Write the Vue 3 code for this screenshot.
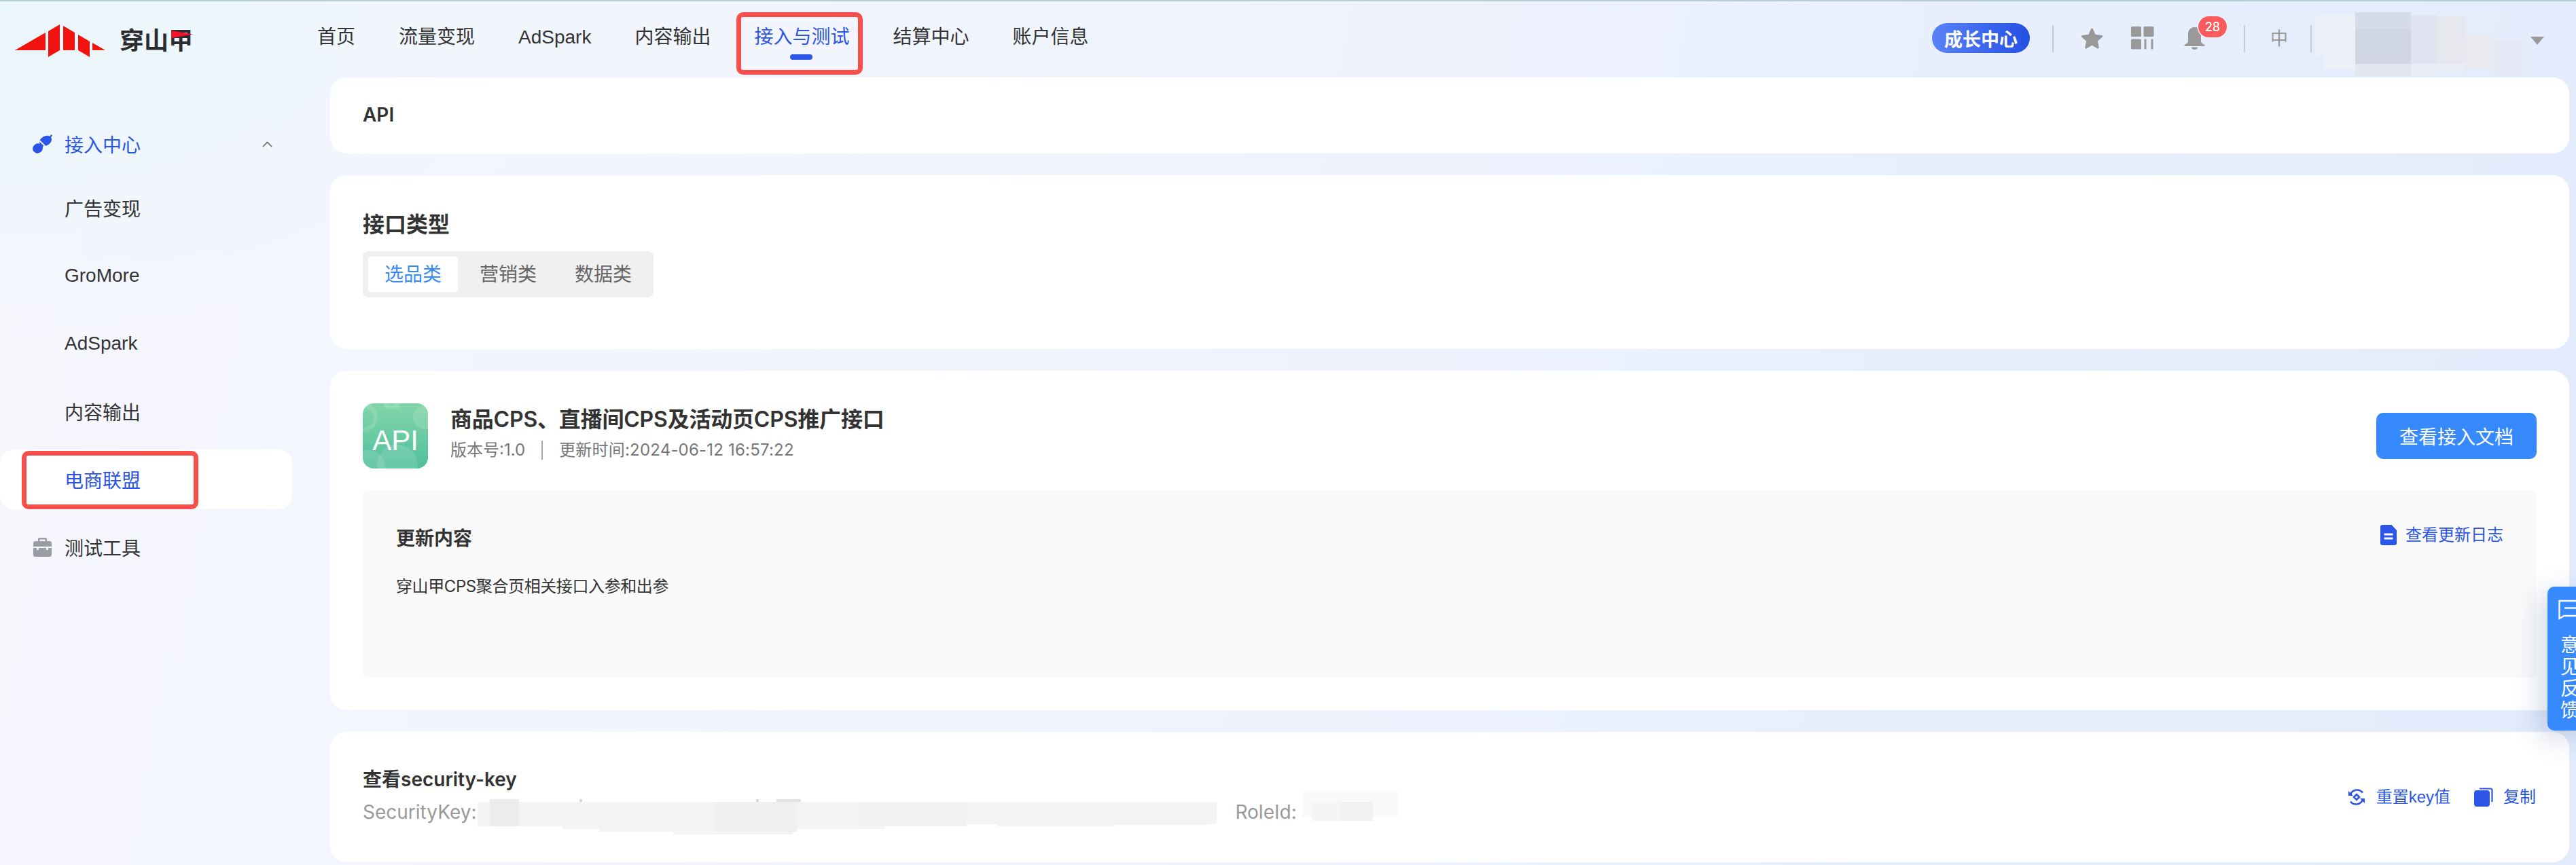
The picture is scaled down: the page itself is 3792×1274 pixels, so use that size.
<script setup>
const navItems = ['首页', '流量变现', 'AdSpark', '内容输出', '接入与测试', '结算中心', '账户信息']
const subItems = ['广告变现', 'GroMore', 'AdSpark', '内容输出', '电商联盟']
const tabs = ['选品类', '营销类', '数据类']
</script>

<template>
  <div class="page">
    <header class="header">
      <div class="logo">
        <svg class="logo-mark" width="134" height="50" viewBox="22 33 134 50">
          <path fill="#f2120f" d="M22 72 67 46V72ZM71 44 88 34V72L71 82ZM93 36 110 46V72H93ZM115 49 132 59V82L115 72ZM136 61 155 72H136Z" />
        </svg>
        <span class="logo-text">穿山甲<i class="logo-flag"></i></span>
      </div>
      <nav class="nav">
        <a v-for="item in navItems" :key="item" class="nav-item" :class="{ active: item === '接入与测试' }">{{ item }}</a>
      </nav>
      <div class="tools">
        <span class="pill">成长中心</span>
        <span class="vline first"></span>
        <svg class="ico star" width="35" height="33" viewBox="0 0 35 33"><path fill="#999" stroke="#999" stroke-width="3" stroke-linejoin="round" d="M17.500 3 21.600 12.300 31.800 13.400 24.200 20.200 26.300 30.100 17.500 25 8.700 30.100 10.800 20.200 3.200 13.400 13.400 12.300Z" /></svg>
        <svg class="ico grid" width="35" height="34" viewBox="0 0 35 34"><g fill="#999"><rect width="15" height="15" rx="1.500" /><rect x="18.500" width="15" height="15" rx="1.500" /><rect y="18.500" width="15" height="15" rx="1.500" /><rect x="19.500" y="18.500" width="3" height="15" rx="1" /><rect x="29.500" y="18.500" width="3" height="15" rx="1" /></g></svg>
        <span class="bell">
          <svg width="33" height="33" viewBox="0 0 33 33"><path fill="#999" d="M16.500 0c5.700 0 9.500 4.500 9.500 10.500v10c0 2 1 3.300 4.500 5 1.800.9 1.500 2.500-.5 2.500H3c-2 0-2.300-1.600-.5-2.500 3.500-1.700 4.500-3 4.500-5v-10C7 4.500 10.800 0 16.500 0ZM12 29.500h9c0 2-2 3.500-4.500 3.500S12 31.500 12 29.500Z" /></svg>
          <b class="badge">28</b>
        </span>
        <span class="vline second"></span>
        <span class="lang">中</span>
        <span class="vline third"></span>
        <svg class="blob" width="310" height="94" viewBox="0 0 310 94">
          <rect x="0" y="4" width="14" height="62" fill="#eaeff9" />
          <rect x="12" y="4" width="48" height="80" fill="#ebf0f9" />
          <rect x="58" y="0" width="82" height="76" fill="#d5dbe8" />
          <rect x="58" y="24" width="82" height="52" fill="#d0d6e3" />
          <rect x="58" y="76" width="82" height="18" fill="#e3e7f2" />
          <rect x="140" y="4" width="38" height="72" fill="#dfe4f0" />
          <rect x="140" y="76" width="38" height="18" fill="#e9edf7" />
          <rect x="178" y="6" width="42" height="70" fill="#e6e8ee" />
          <rect x="178" y="76" width="42" height="14" fill="#e9edf7" />
          <rect x="220" y="34" width="40" height="50" fill="#e8eaef" />
          <rect x="260" y="42" width="46" height="52" fill="#e4e9f5" />
        </svg>
        <i class="caret"></i>
      </div>
    </header>

    <div class="body">
      <aside class="side">
        <div class="side-head">
          <svg class="side-ico" width="29" height="28" viewBox="0 0 29 28">
            <g fill="#2b55e6">
              <ellipse cx="19" cy="9.500" rx="9.500" ry="7" transform="rotate(-30 19 9.500)" />
              <path d="M24 4 27.500 0 29 1.500 26 6Z" />
              <ellipse cx="7.500" cy="20.500" rx="7.500" ry="7" transform="rotate(-30 7.500 20.500)" />
              <path d="M9 13.500 13 16l1.500-1.500 1.500 2-2 2 1 1.500-3 2Z" />
            </g>
            <path d="M10.500 9.500 19 18" stroke="#f1f6fd" stroke-width="2" />
          </svg>
          <span class="side-title">接入中心</span>
          <svg class="chev" width="15" height="9" viewBox="0 0 15 9"><path d="M1 8 7.500 1.500 14 8" fill="none" stroke="#666" stroke-width="1.600" /></svg>
        </div>
        <div class="side-list">
          <a v-for="item in subItems" :key="item" class="side-item" :class="{ on: item === '电商联盟' }">{{ item }}</a>
          <a class="side-item tool">
            <svg class="tool-ico" width="27" height="28" viewBox="0 0 27 28"><path fill="#9a9ca5" d="M9 0h9c1.200 0 2 .8 2 2v3h4c1.700 0 3 1.300 3 3v5H0V8c0-1.700 1.300-3 3-3h4V2c0-1.200.8-2 2-2Zm.5 2.500V5h8V2.500ZM0 15h5v3h3v-3h11v3h3v-3h5v10c0 1.700-1.300 3-3 3H3c-1.700 0-3-1.300-3-3Z" /></svg>
            测试工具
          </a>
        </div>
      </aside>

      <main class="main">
        <section class="card crumb"><b>API</b></section>

        <section class="card types">
          <h2>接口类型</h2>
          <div class="tabs">
            <span v-for="(t, i) in tabs" :key="t" class="tab" :class="{ sel: i === 0 }">{{ t }}</span>
          </div>
        </section>

        <section class="card api">
          <div class="api-top">
            <div class="api-ico">
              <svg class="api-art" width="96" height="96" viewBox="0 0 96 96">
                <g fill="rgba(255,255,255,.13)">
                  <path fill-rule="evenodd" d="M-20 21a21 21 0 1 1 42 0 21 21 0 1 1-42 0Zm6 0a15 15 0 1 0 30 0 15 15 0 1 0-30 0Z" />
                  <path fill-rule="evenodd" d="M31-2h23v6c0 2-2 4-4 4H35c-2 0-4-2-4-4Zm6 0a5 4 0 1 0 11 0Z" />
                  <circle cx="91" cy="21" r="17" />
                  <circle cx="51" cy="91" r="30" />
                  <circle cx="8" cy="94" r="25" />
                </g>
              </svg>
              <span>API</span>
            </div>
            <div class="api-info">
              <h3>商品CPS、直播间CPS及活动页CPS推广接口</h3>
              <p><span>版本号:1.0</span><i></i><span class="stamp">更新时间:2024-06-12 16:57:22</span></p>
            </div>
            <button class="doc">查看接入文档</button>
          </div>
          <div class="panel">
            <div class="panel-head">
              <b>更新内容</b>
              <a class="link">
                <svg width="24" height="30" viewBox="0 0 24 30"><path fill="#2b55e6" fill-rule="evenodd" d="M3 0h13.500L24 8v19c0 1.700-1.300 3-3 3H3c-1.700 0-3-1.300-3-3V3C0 1.300 1.300 0 3 0Zm2.500 12.500v3h13v-3Zm0 6v3h13v-3Z" /></svg>
                查看更新日志
              </a>
            </div>
            <p>穿山甲CPS聚合页相关接口入参和出参</p>
          </div>
        </section>

        <section class="card key">
          <div class="key-left">
            <h4>查看security-key</h4>
            <div class="key-row">
              <span class="key-label">SecurityKey:</span>
              <svg class="smear" width="1088" height="52" viewBox="0 0 1088 52">
                <path fill="#f4f4f4" d="M0 4H1088V37H1074V38H938V40H765V37H711V40H600V44H464V52H288V48H179V44H125V40H98V40H0Z" />
                <rect x="18" y="0" width="43" height="40" fill="#ececec" />
                <rect x="350" y="4" width="120" height="44" fill="#f0f0f0" />
                <rect x="560" y="6" width="160" height="34" fill="#f1f1f1" />
                <rect x="150" y="0" width="4" height="4" fill="#d8d8d8" />
                <rect x="410" y="0" width="4" height="4" fill="#d8d8d8" />
                <rect x="440" y="0" width="36" height="4" fill="#e2e2e2" />
              </svg>
              <span class="key-label role">RoleId:</span>
              <svg class="smear two" width="141" height="42" viewBox="0 0 141 42">
                <rect width="141" height="36" fill="#f9f9f9" />
                <rect x="14" y="14" width="90" height="28" fill="#f5f5f5" />
                <rect x="56" y="14" width="48" height="28" fill="#f2f2f2" />
              </svg>
            </div>
          </div>
          <div class="key-actions">
            <a class="link latin reset">
              <svg width="24" height="26" viewBox="0 0 24 26"><g fill="none" stroke="#2b55e6" stroke-width="2.600"><path d="M3 9A10.500 10.500 0 0 1 21 6.500" /><path d="M21 17A10.500 10.500 0 0 1 3 19.500" /><path d="m12 9 4 4-4 4-4-4Z" /></g><path fill="#2b55e6" d="M0 4V11H7ZM24 22V15H17Z" /></svg>
              重置key值
            </a>
            <a class="link">
              <svg width="28" height="28" viewBox="0 0 28 28"><path fill="none" stroke="#2b55e6" stroke-width="2.200" d="M8 1.500h16c1.400 0 2.500 1.100 2.500 2.500v17" /><rect y="4" width="23" height="24" rx="4" fill="#2b55e6" /></svg>
              复制
            </a>
          </div>
        </section>
      </main>
    </div>

    <aside class="feedback">
      <svg width="30" height="30" viewBox="0 0 30 30" fill="none" stroke="#fff" stroke-width="2.400"><path d="M30 2H1.500v26l7-4H30" /><path d="M9 12.500h21" /></svg>
      <span>意</span><span>见</span><span>反</span><span>馈</span>
    </aside>
  </div>
</template>

<style scoped>
.page {
  position: relative;
  width: 100%;
  height: 1274px;
  overflow: hidden;
  box-sizing: border-box;
  border-top: 2px solid #b6cdd1;
  font-family: Inter, "Noto Sans CJK SC", sans-serif;
  color: #333;
  background:
    radial-gradient(900px 500px at 0 0, #e9f6fb 0%, rgba(233, 246, 251, 0) 100%),
    linear-gradient(100deg, #f6f7fd 0%, #f2f5fd 30%, #e2ebfc 100%);
}
a { display: flex; align-items: center; }

.header { display: flex; align-items: center; height: 112px; }
.logo { display: flex; align-items: center; width: 467px; height: 100%; flex: none; padding-left: 22px; box-sizing: border-box; }
.logo-mark { margin-top: 4px; }
.logo-text { position: relative; margin-left: 20px; margin-top: 4px; font-size: 36px; line-height: 40px; font-weight: 700; color: #2a2c30; white-space: nowrap; }
.logo-flag { position: absolute; right: 0; top: 5px; width: 31px; height: 11px; background: #f8102c; clip-path: polygon(0 0, 100% 50%, 0 100%); }
.nav { display: flex; align-items: center; gap: 64px; height: 100%; }
.nav-item { position: relative; font-family: "Liberation Sans", "Noto Sans CJK SC", sans-serif; font-size: 28px; line-height: 40px; color: #333; white-space: nowrap; margin-top: -6px; }
.nav-item.active { color: #2b55e6; }
.nav-item.active::before { content: ""; position: absolute; left: -26px; right: -20px; top: -17px; height: 92px; box-sizing: border-box; border: 7px solid #f84f4a; border-radius: 10px; }
.nav-item.active::after { content: ""; position: absolute; left: 53px; top: 45px; width: 33px; height: 8px; border-radius: 4px; background: #2b55e6; }
.tools { display: flex; align-items: center; margin-left: auto; padding-right: 47px; height: 100%; }
.pill { width: 144px; height: 44px; border-radius: 22px; margin-top: -4px; display: flex; align-items: center; justify-content: center; font-size: 27px; font-weight: 700; color: #fff; background: linear-gradient(90deg, #5a82f8, #2450e4); }
.vline { width: 2px; height: 40px; background: #c6c8cc; margin-top: -2px; }
.vline.first { margin: -2px 39px 0 33px; }
.vline.second { margin: -2px 37px 0 56px; }
.vline.third { margin: -2px 6px 0 33px; }
.ico { flex: none; margin-top: -4px; }
.star { margin-right: 40px; }
.grid { margin-right: 42px; }
.bell { position: relative; display: flex; margin-top: -4px; }
.badge { position: absolute; left: 22px; top: -16px; width: 42px; height: 31px; border-radius: 16px; background: #fb5a5c; box-shadow: 0 0 0 1.500px #f1f4fd; color: #fff; font-size: 18px; font-weight: 500; line-height: 31px; text-align: center; }
.lang { font-size: 26px; line-height: 36px; color: #999; margin-top: -2px; }
.blob { flex: none; margin: 16px 6px 0 0; align-self: flex-start; }
.caret { width: 0; height: 0; border-left: 10.500px solid transparent; border-right: 10.500px solid transparent; border-top: 12px solid #999; margin-top: 4px; }

.body { display: flex; }
.side { width: 486px; flex: none; padding-top: 54px; box-sizing: border-box; }
.side-head { display: flex; align-items: center; height: 88px; margin-bottom: 6px; padding-left: 48px; }
.side-ico { flex: none; margin-right: 18px; }
.side-title { font-family: "Liberation Sans", "Noto Sans CJK SC", sans-serif; font-size: 28px; color: #2b55e6; }
.chev { margin-left: 179px; }
.side-list { display: flex; flex-direction: column; gap: 12px; }
.side-item { position: relative; width: 430px; height: 88px; padding-left: 95px; box-sizing: border-box; font-family: "Liberation Sans", "Noto Sans CJK SC", sans-serif; font-size: 28px; color: #333; border-radius: 20px; }
.side-item.on { color: #2b55e6; background: #fff; }
.side-item.on::before { content: ""; position: absolute; left: 32px; top: 2px; width: 260px; height: 86px; box-sizing: border-box; border: 7px solid #f84f4a; border-radius: 10px; }
.tool-ico { position: absolute; left: 49px; top: 30px; }

.main { flex: none; width: 3296px; display: flex; flex-direction: column; gap: 32px; }
.card { background: #fff; border-radius: 24px; box-sizing: border-box; padding: 0 48px; }
.crumb { height: 112px; display: flex; align-items: center; font-size: 28px; }
.crumb b { font-weight: 600; color: #333; margin-top: -2px; }
.types { height: 256px; padding-top: 46px; }
.types h2 { margin: 0; font-size: 32px; line-height: 54px; font-weight: 600; color: #333; }
.tabs { display: flex; gap: 8px; margin-top: 12px; padding: 8px; height: 68px; width: 428px; box-sizing: border-box; background: #f0f0f0; border-radius: 8px; }
.tab { flex: none; width: 132px; height: 52px; border-radius: 4px; font-size: 28px; line-height: 52px; text-align: center; color: #666; }
.tab.sel { background: #fff; color: #368afe; }
.api { height: 500px; padding-top: 48px; }
.api-top { display: flex; align-items: flex-start; height: 128px; }
.api-ico { position: relative; overflow: hidden; width: 96px; height: 96px; border-radius: 16px; display: flex; align-items: center; justify-content: center; background: linear-gradient(180deg, #83d5a9, #50c09d); flex: none; }
.api-art { position: absolute; left: 0; top: 0; }
.api-ico span { position: relative; font-family: "Liberation Sans", sans-serif; font-size: 42px; line-height: 48px; color: #fff; margin-top: 14px; }
.api-info { margin-left: 33px; }
.api-info h3 { margin: 0; font-size: 32px; line-height: 48px; font-weight: 600; color: #333; letter-spacing: -.2px; }
.api-info p { display: flex; align-items: center; margin: 6px 0 0; font-size: 24px; line-height: 30px; color: #777; }
.api-info p i { width: 2px; height: 28px; background: #aaa; margin: 0 24px; }
.stamp { letter-spacing: .2px; }
.doc { margin-left: auto; margin-top: 14px; width: 236px; height: 68px; padding: 0; border: 0; border-radius: 10px; background: #368afe; color: #fff; font: inherit; font-size: 28px; }
.panel { height: 276px; padding: 48px 49px; box-sizing: border-box; background: #fafafa; border-radius: 8px; }
.panel-head { display: flex; align-items: center; justify-content: space-between; height: 44px; font-size: 28px; }
.panel-head b { font-weight: 600; color: #333; margin-top: -2px; }
.panel p { margin: 32px 0 0; font-size: 24px; line-height: 36px; color: #333; letter-spacing: -.4px; }
.link { gap: 15px; font-size: 24px; line-height: 36px; color: #2b55e6; }
.latin { font-family: "Liberation Sans", "Noto Sans CJK SC", sans-serif; }
.reset { gap: 17px; }
.panel-head .link { margin-top: -8px; gap: 13px; }
.key { height: 192px; display: flex; align-items: flex-start; justify-content: space-between; padding-top: 46px; padding-right: 49px; }
.key h4 { margin: 0; font-size: 28px; line-height: 48px; font-weight: 600; color: #333; }
.key-row { position: relative; display: flex; align-items: flex-start; height: 48px; font-size: 28px; line-height: 48px; color: #999; }
.smear { display: block; flex: none; margin: 5px 0 0 2px; }
.smear.two { margin: -5px 0 0 8px; }
.role { margin-left: 27px; }
.key-actions { display: flex; align-items: center; gap: 35px; margin-top: 32px; }

.feedback { position: absolute; left: 3750px; top: 862px; width: 60px; height: 212px; box-sizing: border-box; padding: 19px 0 0 16px; background: #368afe; border-radius: 10px 0 0 10px; box-shadow: -10px 10px 40px rgba(40, 70, 130, .22); color: #fff; font-size: 28px; line-height: 32px; display: flex; flex-direction: column; }
.feedback svg { margin-bottom: 21px; flex: none; }
.feedback span { padding-left: 3px; }
</style>
<style>
html, body { margin: 0; }
</style>
